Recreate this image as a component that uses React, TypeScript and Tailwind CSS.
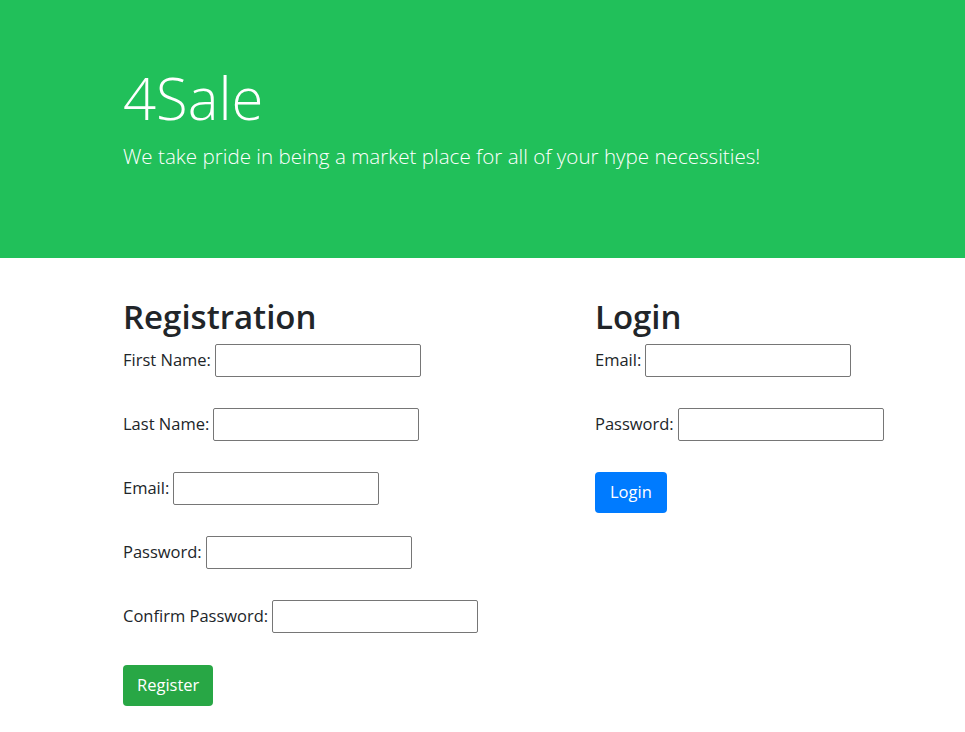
import React from "react";

const font = { fontFamily: '"Open Sans", "Noto Sans", sans-serif' };

function Field({ label }: { label: string }) {
  return (
    <div className="flex items-center h-[33px] mb-[31px]">
      <label className="text-[16.5px] text-[#212529] mr-[4px]">{label}</label>
      <input type="text" className="w-[206px] h-[33px] border border-[#767676] rounded-[2px] bg-white" />
    </div>
  );
}

export default function App() {
  return (
    <div className="min-h-[732px] bg-white" style={font}>
      <div className="bg-[#21c05a] h-[258px] pl-[123px] pt-[63px] text-white">
        <h1 className="text-[58px] font-light leading-[1.2]">4Sale</h1>
        <p className="text-[20.6px] font-light leading-[1.5] mt-[8px]">
          We take pride in being a market place for all of your hype necessities!
        </p>
      </div>
      <div className="pl-[123px] pt-[39px] grid grid-cols-[472px_1fr]">
        <div>
          <h2 className="text-[33px] font-semibold leading-[1.2] text-[#212529] mb-[7px]">Registration</h2>
          <Field label="First Name:" />
          <Field label="Last Name:" />
          <Field label="Email:" />
          <Field label="Password:" />
          <Field label="Confirm Password:" />
          <button className="bg-[#28a745] text-white text-[16.5px] h-[41px] px-[14px] mt-[1px] rounded-[4px]">Register</button>
        </div>
        <div>
          <h2 className="text-[33px] font-semibold leading-[1.2] text-[#212529] mb-[7px]">Login</h2>
          <Field label="Email:" />
          <Field label="Password:" />
          <button className="bg-[#007bff] text-white text-[16.5px] h-[41px] px-[15px] rounded-[4px]">Login</button>
        </div>
      </div>
    </div>
  );
}
